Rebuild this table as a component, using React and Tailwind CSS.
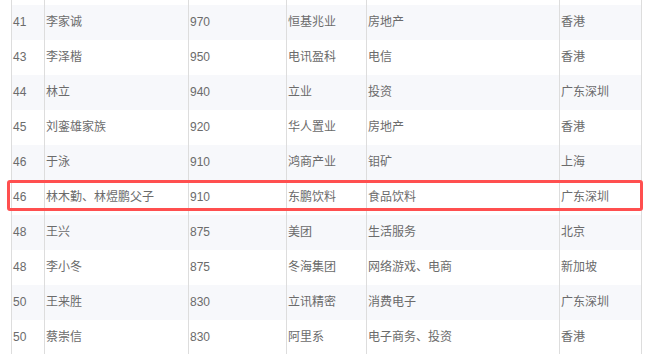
import React from "react";

const rows = [
  ["41", "李家诚", "970", "恒基兆业", "房地产", "香港"],
  ["43", "李泽楷", "950", "电讯盈科", "电信", "香港"],
  ["44", "林立", "940", "立业", "投资", "广东深圳"],
  ["45", "刘銮雄家族", "920", "华人置业", "房地产", "香港"],
  ["46", "于泳", "910", "鸿商产业", "钼矿", "上海"],
  ["46", "林木勤、林煜鹏父子", "910", "东鹏饮料", "食品饮料", "广东深圳"],
  ["48", "王兴", "875", "美团", "生活服务", "北京"],
  ["48", "李小冬", "875", "冬海集团", "网络游戏、电商", "新加坡"],
  ["50", "王来胜", "830", "立讯精密", "消费电子", "广东深圳"],
  ["50", "蔡崇信", "830", "阿里系", "电子商务、投资", "香港"],
];

const grid =
  "grid grid-cols-[33px_144px_98px_80px_193px_81px] w-[631px] ml-[11px] border-r border-[#dddddd]";
const cell = "border-l border-[#dddddd] pl-px whitespace-nowrap overflow-hidden";

export default function App() {
  return (
    <div
      className="relative w-[652px] h-[354px] overflow-hidden bg-white text-[12px] text-[#6b6b6b]"
      style={{ fontFamily: '"Liberation Sans", "Noto Sans CJK SC", sans-serif' }}
    >
      <div className={grid + " h-[5px]"}>
        {[0, 1, 2, 3, 4, 5].map((i) => (
          <div key={i} className={cell} />
        ))}
      </div>
      {rows.map((r, i) => (
        <div
          key={i}
          className={
            grid +
            " h-[35px] leading-[35px] " +
            (i % 2 === 0 ? "bg-[#f7f8fb]" : "bg-white")
          }
        >
          {r.map((c, j) => (
            <div key={j} className={cell}>
              {c}
            </div>
          ))}
        </div>
      ))}
      <div className="absolute left-[7px] top-[180px] w-[636px] h-[31px] border-[3px] border-[#ff4f4f] rounded-[3px]" />
    </div>
  );
}
